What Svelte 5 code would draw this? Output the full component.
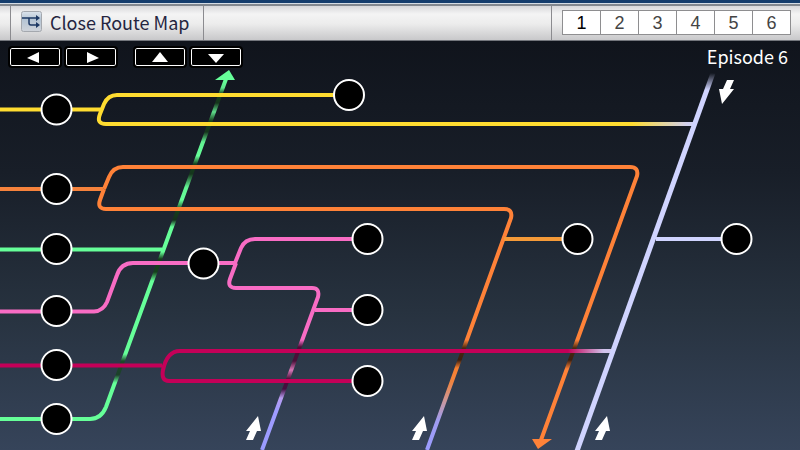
<script>
  const episodes = [1, 2, 3, 4, 5, 6];
  let current = $state(1);

  const pans = [
    { name: 'Pan left', points: '12,4 12,15 0,10' },
    { name: 'Pan right', points: '4,4 4,15 16,10' },
    { name: 'Pan up', points: '0,14 16,14 8,4' },
    { name: 'Pan down', points: '0,6 16,6 8,15' }
  ];

  const nodes = [
    [56.5, 109.5], [56.5, 189], [56.5, 249], [56.5, 311], [56.5, 365], [56.5, 419],
    [203.5, 263.5], [349, 95], [367.5, 239], [367.5, 310], [367.5, 381],
    [577.5, 239], [736.5, 239]
  ];

  const hints = [
    [252, 428, 0], [418, 428, 0], [601, 428, 0], [728, 92, 180]
  ];

  // Vertical colour stops [y, colour]; lines darken where another route passes over.
  const fades = {
    green: [
      [80, '#66ff99'], [88, '#5fe58c'], [94, '#15401c'], [103, '#15351c'], [112, '#5fdc8c'],
      [121, '#15401c'], [132, '#15351c'], [142, '#62f292'], [156, '#66ff99'], [164, '#15401c'],
      [174, '#15351c'], [187, '#62f292'], [200, '#66ff99'], [210, '#15401c'], [220, '#15301c'],
      [227, '#66ff99'], [252, '#66ff99'], [259, '#15401c'], [272, '#15401c'], [281, '#66ff99'],
      [354, '#66ff99'], [361, '#1c4a2a'], [375, '#1c402a'], [383, '#66ff99'], [420, '#66ff99']
    ],
    pink: [
      [288, '#f86cc4'], [340, '#f86cc4'], [347, '#481038'], [361, '#481038'], [370, '#d878b8'],
      [379, '#481038'], [389, '#401040'], [398, '#b89cf0'], [410, '#a09cff'], [450, '#9a9cff']
    ],
    orange: [
      [209, '#ff8238'], [340, '#ff8238'], [348, '#4a2810'], [360, '#3c2010'], [368, '#f88030'],
      [382, '#f08440'], [402, '#c898a0'], [420, '#a09cf0'], [450, '#9a9cff']
    ],
    outer: [
      [167, '#ff8238'], [340, '#ff8238'], [348, '#4a2810'], [360, '#3c2010'], [369, '#ff8238'],
      [450, '#ff8238']
    ],
    lavender: [[73, '#d0d4ff00'], [90, '#d0d4ff'], [450, '#d0d4ff']]
  };
</script>

<div class="page">
  <header>
    <button class="close" type="button">
      <svg class="logo" viewBox="0 0 21 21" aria-hidden="true">
        <defs>
          <linearGradient id="tile" x1="0" y1="0" x2="0" y2="1">
            <stop offset="0" stop-color="#dce4ec" />
            <stop offset="0.4" stop-color="#b4c4d4" />
            <stop offset="1" stop-color="#d0d4da" />
          </linearGradient>
        </defs>
        <rect x="0.5" y="0.5" width="20" height="20" rx="2" fill="url(#tile)" stroke="#a4a8ae" />
        <path d="M1 7H16M8 7V12Q8 14 10 14H16" fill="none" stroke="#1c3864" stroke-width="1.5" />
        <path d="M15 4L19 7L15 10ZM15 11L19 14L15 17Z" fill="#1c3864" />
      </svg>
      Close Route Map
    </button>
    <nav aria-label="Episodes">
      {#each episodes as n}
        <button type="button" class:current={current === n} onclick={() => (current = n)}>{n}</button>
      {/each}
    </nav>
  </header>

  <main>
    <svg class="routes" viewBox="0 41 800 409" preserveAspectRatio="xMinYMin slice" role="img" aria-label="Route map">
      <defs>
        {#each Object.entries(fades) as [name, stops]}
          <linearGradient id={name} gradientUnits="userSpaceOnUse" x1="0" y1="0" x2="0" y2="450">
            {#each stops as [y, colour]}
              <stop offset={y / 450} stop-color={colour} />
            {/each}
          </linearGradient>
        {/each}
        <linearGradient id="yellow" gradientUnits="userSpaceOnUse" x1="0" y1="0" x2="800" y2="0">
          <stop offset="0.79" stop-color="#ffdc30" />
          <stop offset="0.86" stop-color="#d0d0f0" />
        </linearGradient>
        <linearGradient id="crimson" gradientUnits="userSpaceOnUse" x1="0" y1="0" x2="800" y2="0">
          <stop offset="0.71" stop-color="#c40058" />
          <stop offset="0.755" stop-color="#d0c4ec" />
        </linearGradient>
      </defs>

      <g class="lines">
        <path stroke="url(#green)" d="M0 419H90Q101 419 106 407L226 79" />
        <path stroke="url(#green)" d="M0 249.500H162" />
        <path stroke="url(#pink)" d="M236 263L230 279Q227 288 236 288H312Q320 288 318 297L262 450" />
        <path stroke="url(#orange)" d="M104 189L100 200Q97 209 106 209H504Q513 209 511 218L427 450" />
        <path stroke="url(#outer)" d="M104 189L109 177Q113 167 123 167H630Q639 167 637 176L541 440" />
        <path stroke="url(#yellow)" d="M0 109.500H101M334 95H117Q108 95 104 104L100 114Q96 124 106 124H693" />
        <path stroke="#f5823c" d="M0 189H103" />
        <path stroke="#f59a38" d="M504 239H562" />
        <path stroke="#f86cc4" d="M0 311.500H94Q103 311 107 302L117 275Q121 263 133 263H235L241 248Q245 239 255 239H353M315 310H353" />
        <path stroke="url(#crimson)" d="M0 365.500H162M353 381H169Q161 381 163 370Q167 351 180 351H611" />
        <path stroke="#d0d4ff" d="M656 239H721" />
        <path stroke="url(#lavender)" stroke-width="5" d="M713 73L577 451" />
      </g>
      <path fill="#66ff99" d="M229 70L235 80H215Z" />
      <path fill="#ff8238" d="M532 439H552L538 449Z" />

      {#each nodes as [x, y]}
        <circle cx={x} cy={y} r="15" fill="#000" stroke="#fff" stroke-width="2" />
      {/each}
      {#each hints as [x, y, turn]}
        <path fill="#fff" transform="translate({x} {y}) rotate({turn})" d="M6 -12L9 3H5L1 12H-6L-2 3H-6Z" />
      {/each}
    </svg>

    <div class="overlay">
      <div class="pans">
        {#each pans as pan}
          <button type="button" aria-label={pan.name}>
            <svg viewBox="0 0 16 20" aria-hidden="true"><polygon points={pan.points} fill="#fff" /></svg>
          </button>
        {/each}
      </div>
      <h1>Episode 6</h1>
    </div>
  </main>
</div>

<style>
  :global(body) {
    margin: 0;
  }
  .page {
    display: flex;
    flex-direction: column;
    min-height: 100vh;
    font-family: "Noto Sans CJK JP", sans-serif;
  }
  button {
    margin: 0;
    padding: 0;
    font: inherit;
    cursor: pointer;
  }
  header {
    display: flex;
    justify-content: space-between;
    box-sizing: border-box;
    height: 41px;
    padding-left: 10px;
    border-bottom: 1px solid #73767c;
    background:
      linear-gradient(#143c6c 0 3px, #d4dce4 3px 4px, #83888f 4px 6px, transparent 6px),
      linear-gradient(#d8d8da 6px, #f4f4f4 14px, #ececec 24px, #c8c8ca 40px);
  }
  .close {
    display: flex;
    align-items: center;
    gap: 8px;
    margin-top: 6px;
    padding: 0 14px 3px 10px;
    border: solid #8b8b8f;
    border-width: 0 1px;
    background: none;
    color: #252540;
    font-size: 18px;
    line-height: 24px;
  }
  .logo {
    width: 21px;
    height: 21px;
  }
  nav {
    display: flex;
    align-items: center;
    margin-top: 6px;
    padding: 0 9px 1px 10px;
    border-left: 1px solid #8b8b8f;
  }
  nav button {
    box-sizing: border-box;
    width: 39px;
    height: 25px;
    margin-right: -1px;
    border: 1px solid #8e8e90;
    background: #fff;
    color: #444;
    font-family: "Liberation Sans", sans-serif;
    font-size: 18px;
    line-height: 24px;
  }
  nav button:last-child {
    margin-right: 0;
  }
  nav .current {
    color: #000;
  }
  main {
    position: relative;
    flex: 1;
    overflow: hidden;
    background: linear-gradient(#10141c, #181e28 32%, #27323f 66%, #36445a);
  }
  .routes {
    position: absolute;
    inset: 0;
    width: 100%;
    height: 100%;
  }
  .lines {
    fill: none;
    stroke-width: 4;
  }
  .overlay {
    position: relative;
    display: flex;
    justify-content: space-between;
    padding: 3px 12px 0 8px;
  }
  .pans {
    display: flex;
    gap: 2px;
    padding-top: 2px;
  }
  .pans button {
    box-sizing: border-box;
    width: 54px;
    height: 22px;
    border: 2px solid #000;
    border-radius: 4px;
    background: #000;
    display: grid;
    place-items: center;
    box-shadow: inset 0 0 0 1px #fff;
  }
  .pans button:nth-child(3) {
    margin-left: 13px;
  }
  .pans svg {
    width: 16px;
    height: 20px;
  }
  h1 {
    margin: 0;
    color: #fff;
    font-size: 18px;
    font-weight: 400;
    line-height: 24px;
  }
</style>
